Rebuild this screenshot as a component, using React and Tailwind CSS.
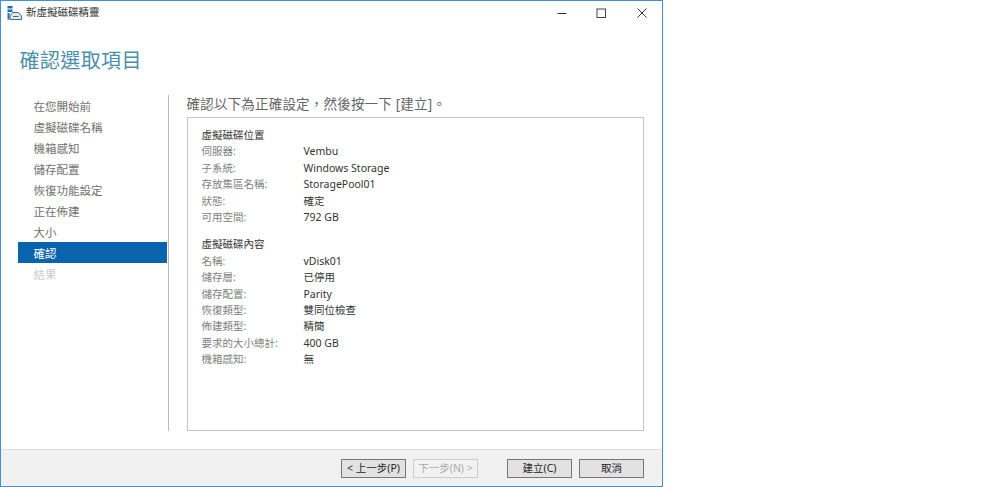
const font = { fontFamily: '"Noto Sans", "Noto Sans CJK TC", sans-serif' };

function Section({ title, rows, className = "" }) {
  return (
    <div className={className}>
      <div className="h-[16.4px] text-[10.5px] leading-[16px] text-[#333]">{title}</div>
      {rows.map(([k, v]) => (
        <div key={k} className="flex h-[16.4px] text-[10.5px] leading-[16px]">
          <div className="w-[102px] text-[#808080]">{k}</div>
          <div className="text-[#333]">{v}</div>
        </div>
      ))}
    </div>
  );
}

function Btn({ children, disabled, className = "" }) {
  return (
    <div
      className={`flex h-[19px] w-[65px] items-center justify-center border text-[10.5px] ${
        disabled
          ? "border-[#ccc] bg-[#f2f2f2] text-[#aaa]"
          : "border-[#777] bg-[#e2e2e2] text-[#222]"
      } ${className}`}
    >
      {children}
    </div>
  );
}

const steps = ["在您開始前", "虛擬磁碟名稱", "機箱感知", "儲存配置", "恢復功能設定", "正在佈建", "大小"];

export default function App() {
  return (
    <div lang="zh-TW" className="h-[487px] w-[1000px] overflow-hidden bg-white" style={font}>
      <div className="flex h-[487px] w-[663px] flex-col border-x-[1.5px] border-y border-[#3f93d3] bg-white">
        <div className="flex h-[27px] shrink-0 items-center pb-[3px]">
          <svg width="15" height="14" viewBox="0 0 15 14" className="ml-[6px]">
            <rect x="0.5" y="0" width="5" height="2.5" fill="#1f6fb0" />
            <rect x="0.5" y="3.5" width="5" height="2.5" fill="#1f6fb0" />
            <rect x="0.5" y="7" width="2" height="6.5" fill="#1f6fb0" />
            <path d="M3 10 L5.5 6.5 H11.5 L14.5 10 V13.5 H3 Z" fill="#dfe8ef" stroke="#45687f" strokeWidth="1" />
            <rect x="6" y="10" width="5.5" height="1" fill="#45687f" />
          </svg>
          <span className="ml-[4px] text-[10.5px] text-[#333]">新虛擬磁碟精靈</span>
          <div className="ml-auto flex items-center">
            <svg width="10" height="10" viewBox="0 0 10 10" className="mr-[29px]">
              <path d="M0.5 5.5 H9.5" stroke="#333" strokeWidth="1" />
            </svg>
            <svg width="10" height="10" viewBox="0 0 10 10" className="mr-[31px]">
              <rect x="1" y="1" width="8.5" height="8.5" fill="none" stroke="#444" strokeWidth="1" />
            </svg>
            <svg width="10" height="10" viewBox="0 0 10 10" className="mr-[15px]">
              <path d="M0.5 0.5 L9.5 9.5 M9.5 0.5 L0.5 9.5" stroke="#333" strokeWidth="1" />
            </svg>
          </div>
        </div>

        <div className="ml-[18.5px] mt-[17px] h-[32px] text-[20px] leading-[32px] tracking-[0.4px] text-[#4a8fab]">
          確認選取項目
        </div>

        <div className="mt-[18px] flex min-h-0 flex-1 pb-[18px]">
          <div className="ml-[16.5px] w-[149px] shrink-0">
            {steps.map((s) => (
              <div key={s} className="h-[21px] pl-[16px] text-[11.5px] leading-[23px] text-[#707070]">
                {s}
              </div>
            ))}
            <div className="h-[21px] bg-[#0a63ad] pl-[16px] text-[11.5px] leading-[23px] text-white">確認</div>
            <div className="h-[21px] pl-[16px] text-[11.5px] leading-[23px] text-[#ccc]">結果</div>
          </div>
          <div className="ml-[1px] w-[1px] shrink-0 bg-[#bbb]" />
          <div className="ml-[18px] flex w-[457px] flex-col pt-[1px]">
            <div className="h-[21px] text-[13.5px] leading-[17px] tracking-[0.2px] text-[#666]">
              確認以下為正確設定，然後按一下 [建立]。
            </div>
            <div className="flex-1 border border-[#c4c4c4] pl-[14px] pt-[9px]">
              <Section
                title="虛擬磁碟位置"
                rows={[
                  ["伺服器:", "Vembu"],
                  ["子系統:", "Windows Storage"],
                  ["存放集區名稱:", "StoragePool01"],
                  ["狀態:", "確定"],
                  ["可用空間:", "792 GB"],
                ]}
              />
              <Section
                className="mt-[11px]"
                title="虛擬磁碟內容"
                rows={[
                  ["名稱:", "vDisk01"],
                  ["儲存層:", "已停用"],
                  ["儲存配置:", "Parity"],
                  ["恢復類型:", "雙同位檢查"],
                  ["佈建類型:", "精簡"],
                  ["要求的大小總計:", "400 GB"],
                  ["機箱感知:", "無"],
                ]}
              />
            </div>
          </div>
        </div>

        <div className="flex h-[37px] shrink-0 items-start border-t border-[#dfdfdf] bg-[#f1f1f1] pl-[340px] pt-[9px]">
          <Btn className="border-[#555]">&lt; 上一步(P)</Btn>
          <Btn disabled className="ml-[7px]">下一步(N) &gt;</Btn>
          <Btn className="ml-[29px]">建立(C)</Btn>
          <Btn className="ml-[7px]">取消</Btn>
        </div>
      </div>
    </div>
  );
}
